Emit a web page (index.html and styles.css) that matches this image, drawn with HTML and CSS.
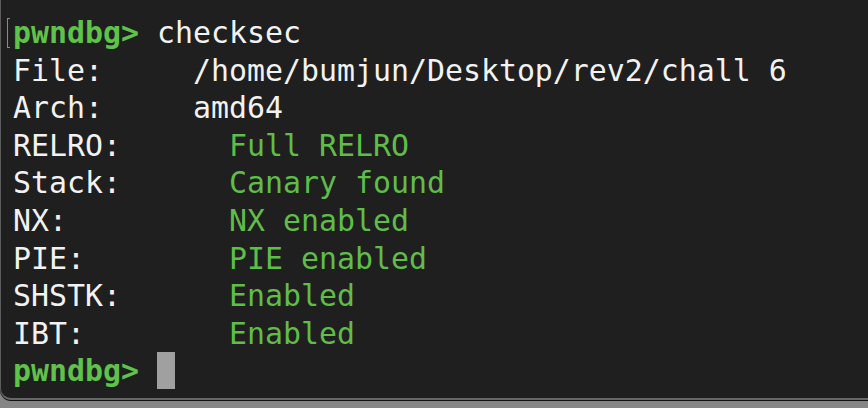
FILE: index.html
```html
<!DOCTYPE html>
<html>
<head>
<meta charset="utf-8">
<link rel="stylesheet" href="styles.css">
</head>
<body>
<div class="desk">
  <div class="term">
    <span class="mark"></span>
    <pre class="out"><span class="prompt">pwndbg&gt;</span> checksec
File:     /home/bumjun/Desktop/rev2/chall 6
Arch:     amd64
RELRO:      <span class="ok">Full RELRO</span>
Stack:      <span class="ok">Canary found</span>
NX:         <span class="ok">NX enabled</span>
PIE:        <span class="ok">PIE enabled</span>
SHSTK:      <span class="ok">Enabled</span>
IBT:        <span class="ok">Enabled</span>
<span class="prompt">pwndbg&gt;</span> <span class="cursor"></span></pre>
  </div>
</div>
</body>
</html>
```
FILE: styles.css
```css
html, body {
  margin: 0;
  padding: 0;
  width: 868px;
  height: 408px;
  overflow: hidden;
  background: #8c8c8c;
}
.desk {
  width: 868px;
  height: 408px;
  background: linear-gradient(#8f8f8f, #868686);
}
.term {
  position: relative;
  box-sizing: border-box;
  width: 880px;
  height: 400px;
  background: #1f1f1f;
  border-left: 1px solid #5c5c5c;
  border-bottom: 2px solid #676767;
  border-bottom-left-radius: 11px;
  box-shadow: 0 1px 0 #111;
  padding: 14px 0 0 12px;
}
.mark {
  position: absolute;
  left: 6px;
  top: 18px;
  width: 2px;
  height: 28px;
  border: 1px solid #8a8a8a;
  border-right: none;
}
.out {
  margin: 0;
  font-family: "DejaVu Sans Mono", monospace;
  font-size: 29.9px;
  line-height: 37.6px;
  color: #f2f2f2;
}
.prompt {
  color: #5fc24a;
  font-weight: bold;
}
.ok {
  color: #5fbd48;
}
.cursor {
  display: inline-block;
  width: 18px;
  height: 37px;
  background: #a0a0a0;
  vertical-align: top;
}
```
